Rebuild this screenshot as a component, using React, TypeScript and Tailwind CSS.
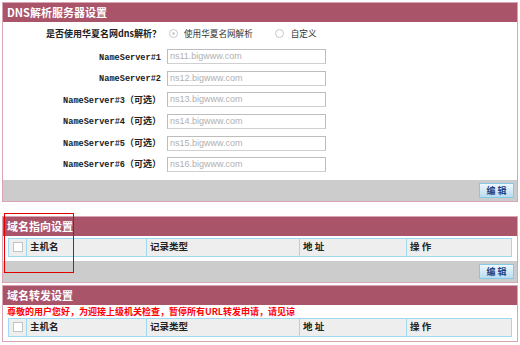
import React from "react";

const ROSE = "bg-[#a95469]";

function Header({ title }: { title: string }) {
  return (
    <div className={`${ROSE} h-[19px] flex items-center pl-[4px] text-white text-[11px] leading-none font-bold font-['Noto_Sans_CJK_SC',sans-serif]`}>
      {title}
    </div>
  );
}

function EditButton() {
  return (
    <div className="w-[35px] h-[15px] border border-[#86c9e6] bg-gradient-to-b from-[#eef7fd] to-[#b9dcf1] flex items-center justify-center text-[9px] leading-none font-bold text-[#1d4282] font-['Noto_Sans_CJK_SC',sans-serif]">
      编&nbsp;辑
    </div>
  );
}

function Field({ value }: { value: string }) {
  return (
    <div className="ml-[6px] w-[159px] h-[15px] border border-[#bdbdbd] border-b-[#d0d0d0] bg-white flex items-center pl-[2px] text-[9px] leading-none text-[#b0b0b0] font-['Liberation_Sans',Arial,sans-serif]">
      {value}
    </div>
  );
}

function NsRow({ n, optional }: { n: number; optional?: boolean }) {
  return (
    <div className="h-[21.6px] flex items-center">
      <div className="w-[158px] text-right text-[8.6px] leading-none font-bold text-[#222]">
        <span className="font-['Liberation_Mono',monospace]">NameServer#{n}</span>
        {optional && <span className="font-['Noto_Sans_CJK_SC',sans-serif] text-[9px]">（可选）</span>}
      </div>
      <Field value={`ns1${n}.bigwww.com`} />
    </div>
  );
}

function Radio({ checked }: { checked?: boolean }) {
  return (
    <span className="w-[9px] h-[9px] rounded-full border border-[#c8c8c8] bg-white flex items-center justify-center">
      {checked && <span className="w-[3px] h-[3px] rounded-full bg-[#d0d0d0]" />}
    </span>
  );
}

function TableHead() {
  const cell = "h-full flex items-center border-l border-[#9fd9f0] text-[9.5px] leading-none font-bold text-[#222]";
  return (
    <div className="mx-[5px] h-[19px] border border-[#9fd9f0] bg-[#eeeeee] flex font-['Noto_Sans_CJK_SC',sans-serif]">
      <div className="w-[17px] h-full flex items-center justify-center">
        <span className="w-[10px] h-[10px] border border-[#c4c4c4] bg-white" />
      </div>
      <div className={`${cell} w-[120px] pl-[3px]`}>主机名</div>
      <div className={`${cell} w-[153px] pl-[3px]`}>记录类型</div>
      <div className={`${cell} w-[107px] pl-[3px]`}>地&nbsp;址</div>
      <div className={`${cell} flex-1 pl-[3px]`}>操&nbsp;作</div>
    </div>
  );
}

export default function App() {
  return (
    <div className="relative w-[520px] h-[345px] bg-white overflow-hidden font-['Noto_Sans_CJK_SC',sans-serif]">
      {/* Panel 1 */}
      <div className="mt-[2px] mx-[2px] border border-[#d9a4b3]">
        <Header title="DNS解析服务器设置" />
        <div className="bg-white pb-[4px]">
          <div className="h-[23px] flex items-center">
            <div className="w-[158px] text-right text-[9px] leading-none font-bold text-[#222]">
              是否使用华夏名网dns解析？
            </div>
            <div className="ml-[8px] flex items-center">
              <Radio checked />
              <span className="ml-[6px] text-[8.6px] leading-none text-[#333]">使用华夏名网解析</span>
            </div>
            <div className="ml-[22px] flex items-center">
              <Radio />
              <span className="ml-[7px] text-[8.6px] leading-none text-[#333]">自定义</span>
            </div>
          </div>
          <div className="mt-[1px]">
            <NsRow n={1} />
            <NsRow n={2} />
            <NsRow n={3} optional />
            <NsRow n={4} optional />
            <NsRow n={5} optional />
            <NsRow n={6} optional />
          </div>
        </div>
        <div className="h-[21px] bg-[#cccccc] flex items-center justify-end pr-[3px]">
          <EditButton />
        </div>
      </div>

      {/* Panel 2 */}
      <div className="mt-[14px] mx-[2px] border border-[#d9a4b3]">
        <Header title="域名指向设置" />
        <div className="bg-white pt-[2px] pb-[4px]">
          <TableHead />
        </div>
        <div className="h-[21px] bg-[#cccccc] flex items-center justify-end pr-[3px]">
          <EditButton />
        </div>
      </div>

      {/* Panel 3 */}
      <div className="mt-[2px] mx-[2px] border border-[#d9a4b3]">
        <Header title="域名转发设置" />
        <div className="bg-white pb-[4px]">
          <div className="h-[13px] flex items-center pl-[4px] text-[9px] leading-none font-bold text-[#ff0000]">
            尊敬的用户您好，为迎接上级机关检查，暂停所有URL转发申请，请见谅
          </div>
          <TableHead />
        </div>
      </div>

      {/* red highlight box */}
      <div className="absolute left-[4px] top-[213px] w-[70px] h-[60px] border border-[#e00000]" />
    </div>
  );
}
